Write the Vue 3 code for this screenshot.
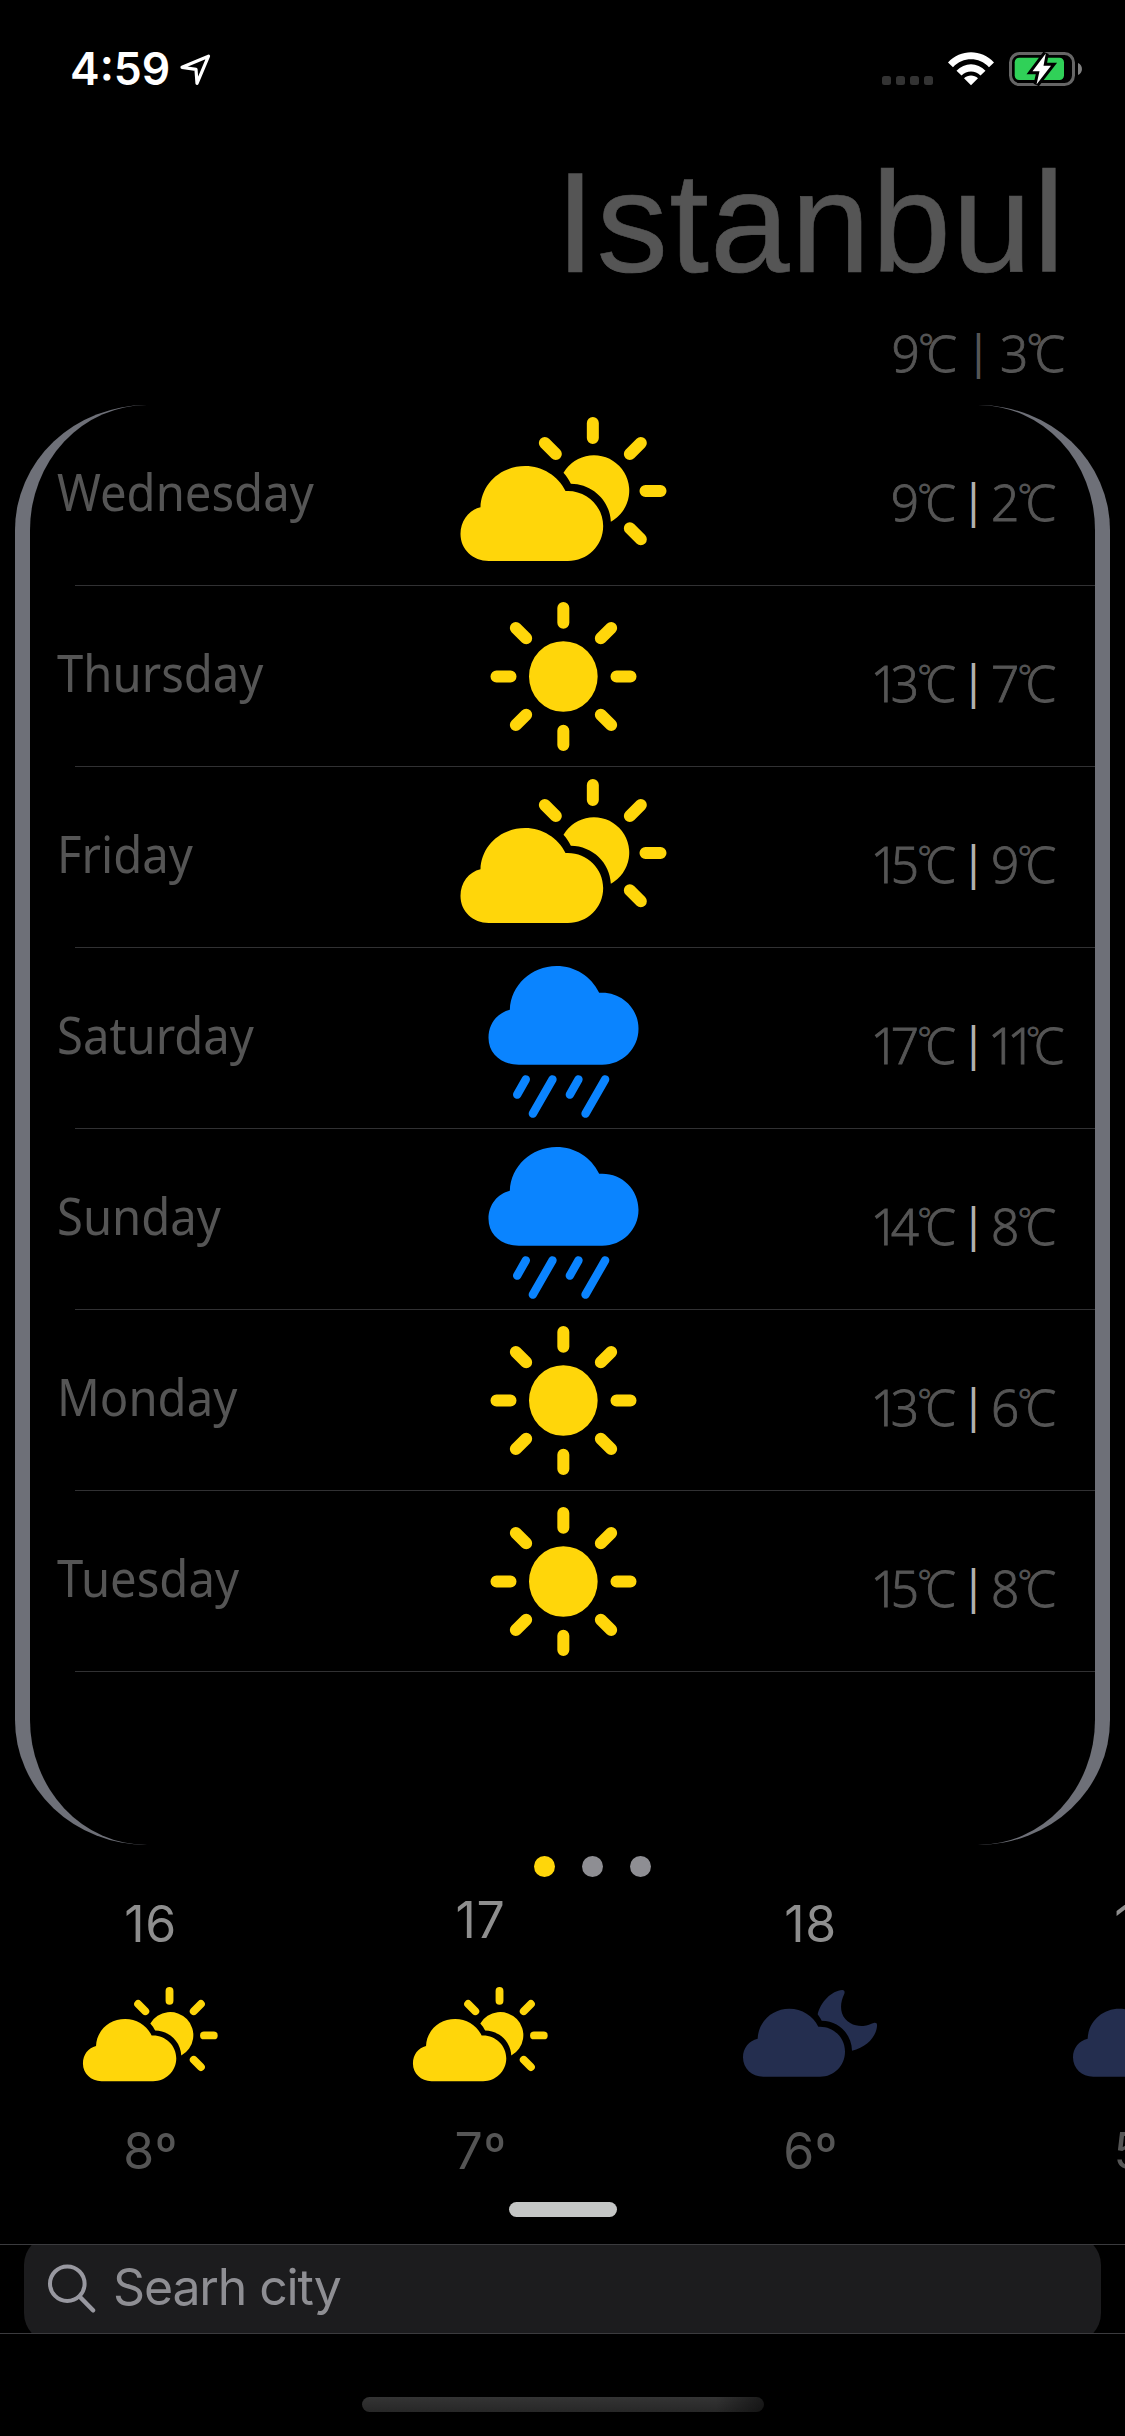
<script setup>
import { h } from 'vue'

const days = [
  { name: 'Wednesday', icon: 'partly', hi: 9, lo: 2 },
  { name: 'Thursday', icon: 'sun', hi: 13, lo: 7 },
  { name: 'Friday', icon: 'partly', hi: 15, lo: 9 },
  { name: 'Saturday', icon: 'rain', hi: 17, lo: 11 },
  { name: 'Sunday', icon: 'rain', hi: 14, lo: 8 },
  { name: 'Monday', icon: 'sun', hi: 13, lo: 6 },
  { name: 'Tuesday', icon: 'sun', hi: 15, lo: 8 },
]

const hours = [
  { hour: 16, icon: 'partly', temp: 8 },
  { hour: 17, icon: 'partly', temp: 7, raised: true },
  { hour: 18, icon: 'night', temp: 6 },
  { hour: 19, icon: 'night', temp: 5 },
]

const icons = {
  partly: {
    box: '76.5 45 642 540',
    color: '#ffd60a',
    stroke: 36,
    fill: 'M175 513H412C470 513 518 468 518 408C518 350 470 303 412 303L405 303C383 258 336 228 284 228C210 228 152 282 150 352C115 360 90 392 90 432C90 478 127 513 175 513ZM399 248A106 106 0 1 1 541 395C538 332 487 282 421 281C415 268 408 258 399 248Z',
    lines: 'M487 99V144M645 303H690M598 192L631 159M343 159L376 192M598 415L631 448',
  },
  sun: {
    box: '76.5 588 642 540',
    color: '#ffd60a',
    stroke: 36,
    fill: 'M295.500 859.500A103 106 0 1 1 501.500 859.500A103 106 0 1 1 295.500 859.500Z',
    lines: 'M398.500 654V698M398.500 1022V1065M198 859.500H240M558 859.500H600M256 714L287 745M542 714L511 745M256 1005L287 974M542 1005L511 974',
  },
  rain: {
    box: '16.5 24 642 540',
    color: '#0a84ff',
    stroke: 25,
    fill: 'M205 374H455C516 374 564 325 564 266C564 206 516 158 455 158L446 158C422 109 374 78 318 78C242 78 181 136 178 209C141 218 114 251 114 293C114 341 153 374 205 374Z',
    lines: 'M226 418L200 464M306 418L247 521M384 418L358 464M464 418L405 521',
  },
  night: {
    box: '120 1017 420 354',
    color: '#242e4f',
    stroke: 0,
    fill: 'M190 1310H360C402 1310 435 1277 435 1235C435 1193 401 1160 360 1160H355C339 1127 306 1106 268 1106C216 1106 175 1145 173 1196C147 1202 129 1224 129 1252C129 1286 155 1310 190 1310ZM353 1123C362 1085 395 1052 427 1050C433 1050 435 1055 433 1061C424 1080 420 1100 426 1120C436 1150 468 1160 490 1158C503 1157 512 1152 521 1149C528 1147 532 1150 531 1158C529 1190 500 1222 456 1232C455 1185 420 1143 365 1142C361 1134 357 1129 353 1123Z',
    lines: '',
  },
}

const WeatherIcon = ({ name }) => {
  const i = icons[name]
  return h('svg', { viewBox: i.box }, [
    h('path', { d: i.fill, fill: i.color }),
    h('path', { d: i.lines, fill: 'none', stroke: i.color, 'stroke-width': i.stroke, 'stroke-linecap': 'round' }),
  ])
}
WeatherIcon.props = ['name']
</script>

<template>
  <main class="screen">
    <header class="status">
      <span class="time">4:59</span>
      <svg class="arrow" viewBox="0 0 34 34">
        <path d="M3 15.300L29.500 4.200L18 31.300L17 17.300Z" fill="none" stroke="#fff" stroke-width="3.200" stroke-linejoin="round" />
      </svg>
      <span class="spacer"></span>
      <div class="signal"><i v-for="n in 4" :key="n"></i></div>
      <svg class="wifi" viewBox="0 0 46 34" fill="#fff">
        <path d="M0 10.500C12.500-3.200 33.500-3.200 46 10.500L41 15.300C31 4.700 15 4.700 5 15.300Z" />
        <path d="M8.500 18.700C16.500 10 29.500 10 37.500 18.700L32.500 23.500C27.300 18 18.700 18 13.500 23.500Z" />
        <path d="M16 26.300C20 22.500 26 22.500 30 26.300L23 33.300Z" />
      </svg>
      <svg class="battery" viewBox="0 0 74 38">
        <rect x="1.500" y="3.500" width="63" height="31" rx="9" fill="none" stroke="#666" stroke-width="3" />
        <path d="M69 13C74.300 15 74.300 23 69 25Z" fill="#808080" />
        <rect x="5.700" y="7.700" width="49.300" height="22.300" rx="4.500" fill="#30d158" />
        <path d="M36.800 3.500L23.500 21.300H30.500L27.500 34.500L42 15.700H34.500Z" fill="#fff" stroke="#000" stroke-width="6" paint-order="stroke" />
      </svg>
    </header>

    <h1 class="city">Istanbul</h1>

    <div class="temps today">
      <span class="hi">9<small>°</small>C</span>
      <span class="bar">|</span>
      <span class="lo">3<small>°</small>C</span>
    </div>

    <section class="forecast">
      <div v-for="d in days" :key="d.name" class="day">
        <div class="name"><span>{{ d.name }}</span></div>
        <WeatherIcon class="icon" :name="d.icon" />
        <div class="temps">
          <span class="hi"><b v-for="(c, k) in String(d.hi)" :key="k" :class="{ one: c === '1' }">{{ c }}</b><small>°</small>C</span>
          <span class="bar">|</span>
          <span class="lo"><b v-for="(c, k) in String(d.lo)" :key="k" :class="{ one: c === '1' }">{{ c }}</b><small>°</small>C</span>
        </div>
      </div>
    </section>

    <nav class="pager"><i class="active"></i><i></i><i></i></nav>

    <section class="hours">
      <div v-for="t in hours" :key="t.hour" class="hour">
        <span class="clock" :class="{ raised: t.raised }">{{ t.hour }}</span>
        <WeatherIcon class="small-icon" :name="t.icon" />
        <span class="degrees">{{ t.temp }}º</span>
      </div>
    </section>

    <div class="handle"></div>

    <div class="search">
      <div class="field">
        <svg class="lens" viewBox="0 0 48 50" fill="none" stroke="#9898a0" stroke-linecap="round">
          <circle cx="19.300" cy="19.700" r="17.300" stroke-width="4" />
          <path d="M32 33L45 46.300" stroke-width="4.500" />
        </svg>
        <span class="placeholder">Searh city</span>
      </div>
    </div>

    <div class="home"></div>
  </main>
</template>

<style>
body {
  margin: 0;
  background: #000;
}
</style>

<style scoped>
.screen {
  width: 1125px;
  height: 2436px;
  overflow: hidden;
  background: #000;
  color: #555;
  font-family: Inter, "Liberation Sans", sans-serif;
  display: flex;
  flex-direction: column;
}
.screen > * {
  flex-shrink: 0;
}
.status {
  box-sizing: border-box;
  height: 138px;
  padding: 0 42px 0 70px;
  display: flex;
  align-items: center;
}
.time {
  color: #fff;
  font-size: 44.5px;
  font-weight: 600;
}
.arrow {
  width: 34px;
  height: 34px;
  margin-left: 9px;
}
.spacer {
  flex: 1;
}
.signal {
  display: flex;
  gap: 5px;
  padding-top: 23px;
}
.signal i {
  width: 9px;
  height: 9px;
  border-radius: 2.5px;
  background: #333;
}
.wifi {
  width: 46px;
  height: 34px;
  margin-left: 15px;
}
.battery {
  width: 74px;
  height: 38px;
  margin-left: 15px;
}
.city {
  margin: 0;
  padding-right: 59px;
  height: 169px;
  font: 400 143px/169px "Liberation Sans", sans-serif;
  letter-spacing: 1.2px;
  text-align: right;
  -webkit-text-stroke: 0.6px #555;
}
.temps {
  display: grid;
  grid-template-columns: 286px 35px 1fr;
  font: 300 49.5px/91px "Noto Sans", sans-serif;
  white-space: nowrap;
}
.hi,
.lo {
  -webkit-text-stroke: 0.8px #555;
}
.temps b {
  font-weight: inherit;
}
.temps .one {
  margin: 0 -8px 0 -3px;
}
.temps .one + .one {
  margin-left: -1px;
}
.temps small {
  font-size: 33px;
  line-height: 0;
  font-weight: 300;
  vertical-align: 13px;
  margin: 0 -6.5px 0 -1.5px;
}
.hi {
  text-align: right;
}
.bar {
  text-align: center;
  font-size: 46px;
  line-height: 85px;
  font-weight: 400;
  color: #b0b0b0;
}
.today {
  box-sizing: border-box;
  height: 98px;
  padding-top: 1px;
  margin-left: 670px;
  grid-template-columns: 287px 43px 1fr;
}
.today .bar {
  color: #555;
}
.today small {
  font-size: 37px;
  vertical-align: 11px;
  margin: 0 -8px 0 -1.5px;
}
.forecast {
  box-sizing: border-box;
  height: 1440px;
  margin: 0 15px;
  border: solid #6e7078;
  border-width: 0 15px;
  border-radius: 132px / 125px;
}
.day {
  height: 181px;
  display: grid;
  grid-template-columns: 426px 214px 1fr;
  align-items: center;
  background: linear-gradient(#313133, #313133) 45px 180px / 1020px 1px no-repeat;
}
.name {
  padding: 0 0 9px 27px;
  font: 400 51px/70px "Noto Sans", sans-serif;
}
.name span {
  display: inline-block;
  transform: scaleX(0.926);
  transform-origin: left;
}
.icon {
  width: 214px;
  height: 180px;
  align-self: start;
}
.day .temps {
  padding-top: 14px;
}
.pager {
  box-sizing: border-box;
  height: 49px;
  padding: 11px 0 0 534px;
  display: flex;
  gap: 27px;
}
.pager i {
  width: 21px;
  height: 21px;
  border-radius: 50%;
  background: #8e8e93;
}
.pager .active {
  background: #ffd60a;
}
.hours {
  height: 308px;
  display: grid;
  grid-template-columns: repeat(4, 330px);
  margin-left: -15px;
  font-size: 50px;
  line-height: 60px;
  letter-spacing: 0.6px;
}
.hour {
  display: flex;
  flex-direction: column;
  align-items: center;
}
.clock {
  color: #8e8e8e;
}
.clock,
.degrees {
  padding-left: 1px;
}
.raised {
  margin: -4px 0 4px;
}
.small-icon {
  width: 140px;
  height: 118px;
  margin: 25px 0 24px;
}
.handle {
  width: 108px;
  height: 15px;
  margin-left: 509px;
  border-radius: 8px;
  background: #c4c6c5;
}
.search {
  box-sizing: border-box;
  height: 90px;
  margin-top: 27px;
  padding: 0 24px;
  border: solid #3b3b3e;
  border-width: 1px 0;
  overflow: hidden;
  display: flex;
  align-items: center;
}
.field {
  box-sizing: border-box;
  flex: 1;
  height: 108px;
  padding-left: 24px;
  border-radius: 30px;
  background: #1c1c1e;
  display: flex;
  align-items: center;
}
.lens {
  width: 48px;
  height: 50px;
}
.placeholder {
  margin: -4px 0 0 17px;
  color: #8e8e93;
  font-size: 50px;
  letter-spacing: -1.15px;
}
.home {
  width: 402px;
  height: 15px;
  margin: 63px 0 0 362px;
  border-radius: 8px;
  background: linear-gradient(90deg, transparent 88%, rgba(0, 0, 0, 0.5)), linear-gradient(#343434, #272727);
}
</style>
